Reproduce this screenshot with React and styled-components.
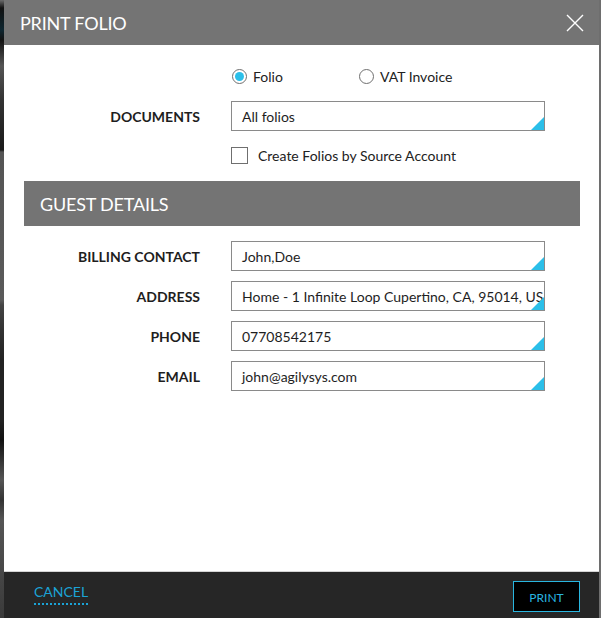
import React from "react";
import styled, { createGlobalStyle } from "styled-components";

const GlobalStyle = createGlobalStyle`
    html, body { margin: 0; padding: 0; }
    body {
        background: #2a2a2a;
        font-family: Lato, "Open Sans", sans-serif;
        overflow: hidden;
    }
`

const Page = styled.div`
    display: flex;
    width: 601px;
    height: 618px;
`, Backdrop = styled.div`
    width: 4px;
    background: linear-gradient(to bottom,
        #6a6a6a 0, #111 8px, #0d2630 30px, #111 40px, #555 66px, #333 100px,
        #1a1a1a 150px, #555 152px, #5a5a5a 300px, #444 305px, #333 330px,
        #222 360px, #222 420px, #111 440px, #555 480px, #333 500px, #555 520px, #3a3a3a 618px);
`, Modal = styled.div`
    width: 595px;
    display: flex;
    flex-direction: column;
    background: #fff;
`, RightEdge = styled.div`
    width: 2px;
    background: #6e6e6e;
`, Header = styled.div`
    height: 45px;
    flex-shrink: 0;
    background: #747474;
    display: flex;
    align-items: center;
    justify-content: space-between;
    padding: 0 14px 0 16px;
`, Title = styled.h1`
    margin: 0;
    font-size: 18px;
    font-weight: 400;
    color: #fff;
    letter-spacing: -0.2px;
`, Close = styled.button`
    border: 0;
    background: none;
    padding: 0;
    width: 20px;
    height: 20px;
    display: flex;
    cursor: pointer;
`, Body = styled.div`
    flex: 1;
    padding-top: 23px;
    display: flex;
    flex-direction: column;
`, Form = styled.div`
    display: grid;
    grid-template-columns: 197px 314px;
    column-gap: 30px;
    row-gap: ${p => p.$gap}px;
    align-items: center;
`, Label = styled.div`
    text-align: right;
    font-size: 14px;
    font-weight: 700;
    color: #1e1e1e;
    padding-right: 1px;
`, RadioGroup = styled.div`
    grid-column: 2;
    display: flex;
    height: 16px;
    align-items: center;
    padding-left: 1px;
`, RadioItem = styled.label`
    display: flex;
    align-items: center;
    gap: 6px;
    width: 127px;
    font-size: 14px;
    color: #222;
`, RadioDot = styled.span`
    width: 15px;
    height: 15px;
    box-sizing: border-box;
    border: 1.5px solid #6f6f6f;
    border-radius: 50%;
    display: flex;
    align-items: center;
    justify-content: center;
    &::after {
        content: "";
        width: 9px;
        height: 9px;
        border-radius: 50%;
        background: ${p => (p.$on ? "#2bbfe9" : "transparent")};
    }
`, Field = styled.div`
    position: relative;
    height: 30px;
    box-sizing: border-box;
    border: 1px solid #8a8a8a;
    padding: 0 0 0 10px;
    display: flex;
    align-items: center;
    font-size: 14px;
    color: #1e1e1e;
    white-space: nowrap;
    overflow: hidden;
    &::after {
        content: "";
        position: absolute;
        right: 0;
        bottom: 0;
        width: 13px;
        height: 13px;
        background: #2bbfe9;
        clip-path: polygon(100% 0, 100% 100%, 0 100%);
    }
`, CheckRow = styled.label`
    grid-column: 2;
    display: flex;
    align-items: center;
    gap: 10px;
    margin-top: -1px;
    font-size: 14px;
    color: #222;
`, CheckBox = styled.span`
    width: 17px;
    height: 17px;
    box-sizing: border-box;
    border: 1px solid #6f6f6f;
`, Section = styled.h2`
    margin: 17px 19px 15px 20px;
    height: 45px;
    background: #747474;
    color: #fff;
    font-size: 18px;
    font-weight: 400;
    display: flex;
    align-items: center;
    padding-left: 16px;
    letter-spacing: -0.2px;
`, Footer = styled.div`
    height: 46px;
    flex-shrink: 0;
    background: #262626;
    border-top: 1px solid #d4d4d4;
    display: flex;
    align-items: center;
    justify-content: space-between;
    padding: 0 19px 0 30px;
`, Cancel = styled.a`
    font-size: 14px;
    color: #1ba3d6;
    padding-bottom: 3px;
    border-bottom: 2px dotted #1ba3d6;
    margin-top: -2px;
    cursor: pointer;
`, PrintButton = styled.button`
    width: 67px;
    height: 31px;
    margin-top: 3px;
    background: #000;
    border: 1px solid #29b6e0;
    color: #29b6e0;
    font-family: Lato, sans-serif;
    font-size: 12px;
    padding: 2px 0 0;
    cursor: pointer;
`

const guest = [
    ["BILLING CONTACT", "John,Doe"],
    ["ADDRESS", "Home - 1 Infinite Loop Cupertino, CA, 95014, USA"],
    ["PHONE", "07708542175"],
    ["EMAIL", "john@agilysys.com"],
]

export default function App() {
    return (
        <Page>
            <GlobalStyle />
            <Backdrop />
            <Modal>
                <Header>
                    <Title>PRINT FOLIO</Title>
                    <Close aria-label="close">
                        <svg width="20" height="20" viewBox="0 0 20 20">
                            <path d="M2 2 L18 18 M18 2 L2 18" stroke="#fff" strokeWidth="1.4" />
                        </svg>
                    </Close>
                </Header>
                <Body>
                    <Form $gap={17}>
                        <RadioGroup>
                            <RadioItem><RadioDot $on />Folio</RadioItem>
                            <RadioItem><RadioDot />VAT Invoice</RadioItem>
                        </RadioGroup>
                        <Label>DOCUMENTS</Label>
                        <Field>All folios</Field>
                        <CheckRow><CheckBox />Create Folios by Source Account</CheckRow>
                    </Form>
                    <Section>GUEST DETAILS</Section>
                    <Form $gap={10}>
                        {guest.map(([label, value]) => (
                            <React.Fragment key={label}>
                                <Label>{label}</Label>
                                <Field>{value}</Field>
                            </React.Fragment>
                        ))}
                    </Form>
                </Body>
                <Footer>
                    <Cancel>CANCEL</Cancel>
                    <PrintButton>PRINT</PrintButton>
                </Footer>
            </Modal>
            <RightEdge />
        </Page>
    )
}
